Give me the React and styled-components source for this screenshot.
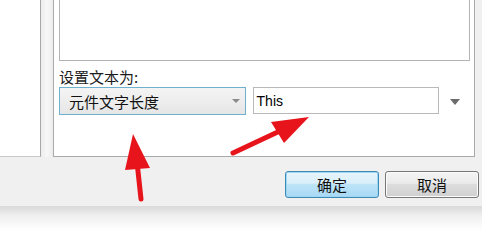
import React from 'react';
import styled, { createGlobalStyle } from 'styled-components';

const Global = createGlobalStyle`
    html, body { margin: 0; padding: 0; background: #fff; }
    body { font-family: "Noto Sans CJK SC", "Liberation Sans", sans-serif; }
`;

const Screen = styled.div`
    position: relative;
    width: 482px;
    height: 238px;
    overflow: hidden;
    background: #fff;
`;

const Dialog = styled.div`
    background: #f0f0f0;
    display: flex;
    flex-direction: column;
`;

const TopRow = styled.div`
    display: flex;
    height: 157px;
`;

const LeftPanel = styled.div`
    width: 40px;
    background: #fff;
    border-right: 1px solid #a8a8a8;
    border-bottom: 1px solid #c8c8c8;
`;

const Splitter = styled.div`
    width: 12px;
    background: linear-gradient(to right, #ececec, #f7f7f7 50%, #ececec);
`;

const RightPanel = styled.div`
    width: 422px;
    background: #fff;
    border: 1px solid #a9a9a9;
    border-top: none;
    padding: 0 4px 0 5px;
    box-sizing: border-box;
    display: flex;
    flex-direction: column;
`;

const TextArea = styled.div`
    height: 61px;
    border: 1px solid #b4b4b4;
    border-top: none;
    box-sizing: border-box;
    background: #fff;
`;

const Label = styled.div`
    margin-top: 6px;
    font-size: 15px;
    line-height: 20px;
    color: #1a1a1a;
`;

const FieldRow = styled.div`
    display: flex;
    align-items: flex-start;
`;

const Combo = styled.div`
    width: 187px;
    height: 28px;
    box-sizing: border-box;
    border: 1px solid #6fb0cf;
    background: linear-gradient(#f4f4f4, #e6e6e6);
    display: flex;
    align-items: center;
    justify-content: space-between;
    padding: 0 5px 0 9px;
    font-size: 15px;
    color: #111;
`;

const Caret = styled.span`
    width: 0;
    height: 0;
    border-left: ${p => p.$w}px solid transparent;
    border-right: ${p => p.$w}px solid transparent;
    border-top: ${p => p.$h}px solid ${p => p.$color};
`;

const TextInput = styled.div`
    margin-left: 7px;
    width: 187px;
    height: 27px;
    box-sizing: border-box;
    border: 1px solid #b9b9b9;
    background: #fff;
    display: flex;
    align-items: center;
    padding-left: 3px;
    font-family: "Liberation Sans", Arial, sans-serif;
    font-size: 14px;
    color: #000;
`;

const DropSlot = styled.div`
    width: 31px;
    height: 30px;
    display: flex;
    align-items: center;
    justify-content: center;
`;

const ButtonBar = styled.div`
    height: 49px;
    display: flex;
    justify-content: flex-end;
    gap: 6px;
    padding: 14px 3px 0 0;
    box-sizing: border-box;
`;

const Button = styled.button`
    width: 94px;
    height: 27px;
    border-radius: 3px;
    font-family: "Noto Sans CJK SC", sans-serif;
    font-size: 15px;
    color: #111;
    padding: 0;
    border: 1px solid ${p => (p.$primary ? '#3d8ab5' : '#777')};
    background: ${p => p.$primary
        ? 'linear-gradient(#e8f5fc 0%, #d9effa 45%, #bde4f7 50%, #a7d9f5 100%)'
        : 'linear-gradient(#f4f4f4 0%, #ebebeb 45%, #dddddd 50%, #cfcfcf 100%)'};
    box-shadow: inset 0 0 0 1px ${p => (p.$primary ? '#9fd7f2' : '#fbfbfb')};
`;

const Shadow = styled.div`
    height: 24px;
    background: linear-gradient(#d9d9d9, #efefef 40%, #fff);
`;

const Overlay = styled.svg`
    position: absolute;
    left: 0;
    top: 0;
    pointer-events: none;
`;

export default function App() {
    return (
        <Screen>
            <Global />
            <Dialog>
                <TopRow>
                    <LeftPanel />
                    <Splitter />
                    <RightPanel>
                        <TextArea />
                        <Label>设置文本为:</Label>
                        <FieldRow>
                            <Combo>
                                <span>元件文字长度</span>
                                <Caret $w={4} $h={4} $color="#8a8a8a" />
                            </Combo>
                            <TextInput>This</TextInput>
                            <DropSlot>
                                <Caret $w={5} $h={6} $color="#6b6b6b" />
                            </DropSlot>
                        </FieldRow>
                    </RightPanel>
                </TopRow>
                <ButtonBar>
                    <Button $primary>确定</Button>
                    <Button>取消</Button>
                </ButtonBar>
            </Dialog>
            <Shadow />

            {/* red annotation arrows */}
            <Overlay width="482" height="238" viewBox="0 0 482 238">
                <line x1="141" y1="199" x2="137" y2="162" stroke="#e8141b" strokeWidth="5" strokeLinecap="round" />
                <polygon points="133,134 125,170 150,168" fill="#e8141b" />
                <line x1="233" y1="153" x2="282" y2="130" stroke="#e8141b" strokeWidth="5" strokeLinecap="round" />
                <polygon points="309,117 271,122 284,143" fill="#e8141b" />
            </Overlay>
        </Screen>
    );
}
